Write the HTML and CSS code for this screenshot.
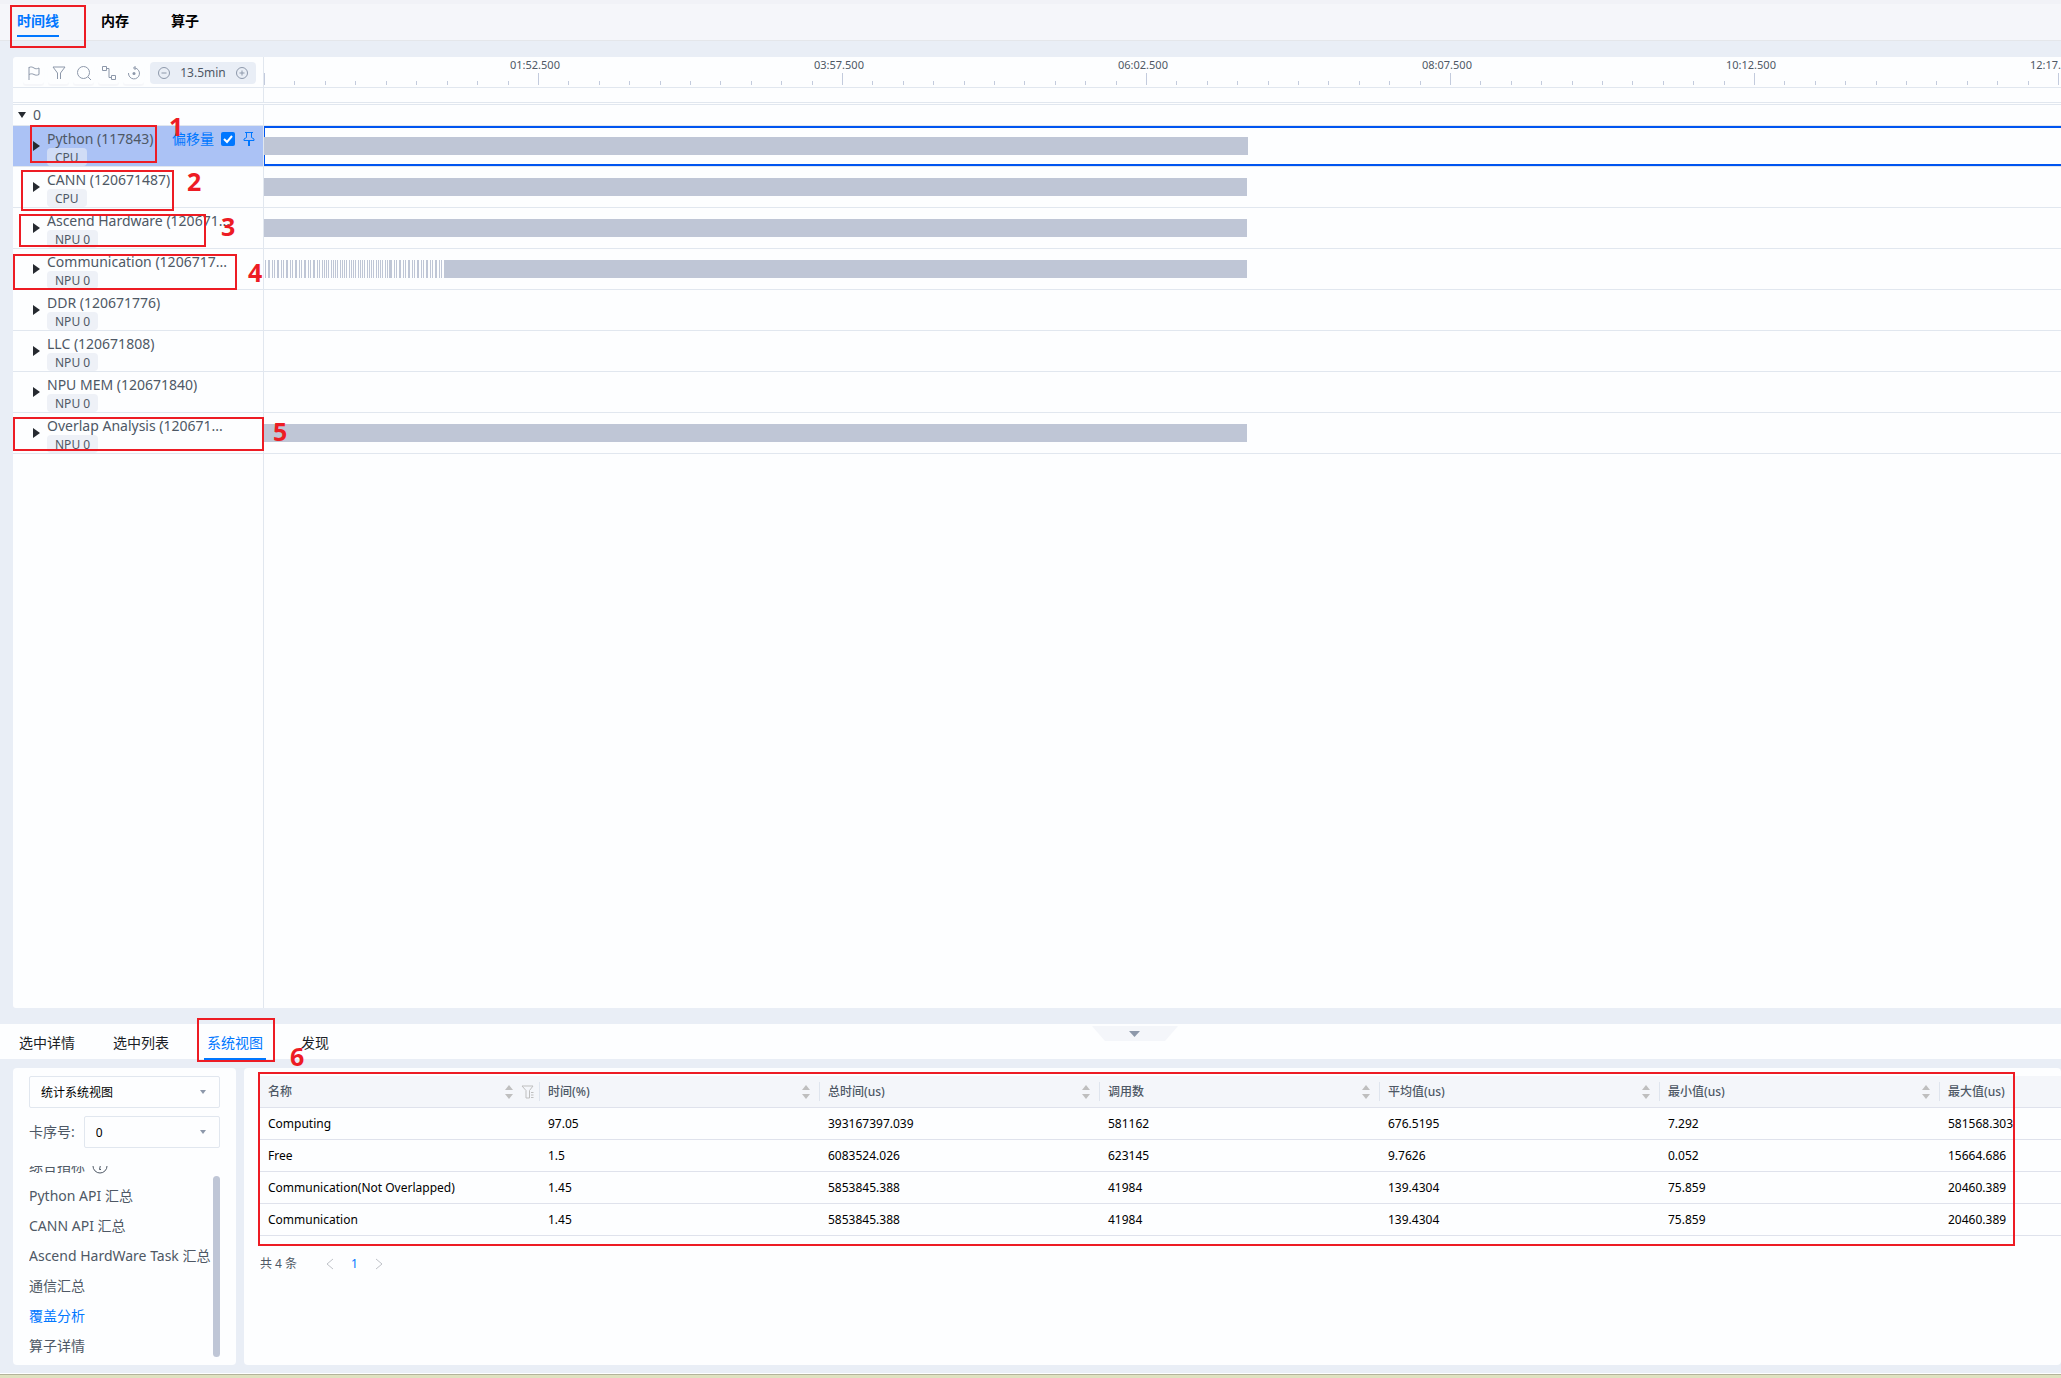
FILE: index.html
```
<!DOCTYPE html>
<html lang="zh-CN">
<head>
  <meta charset="UTF-8">
  <meta name="viewport" content="width=device-width, initial-scale=1.0">
  <title>时间线</title>
  <link rel="stylesheet" href="styles.css">
</head>
<body>
  <nav class="top-tabs">
    <button class="top-tab active">时间线</button>
    <button class="top-tab">内存</button>
    <button class="top-tab">算子</button>
  </nav>

  <main class="timeline">
    <div class="timeline-head">
      <div class="toolbar">
        <button class="tool" aria-label="标记">
          <svg width="16" height="16" viewBox="0 0 16 16"><path d="M3 15V2M3 2.500c2-1 3.500-.500 5 .500s3 1 5 0v6.500c-2 1-3.500.800-5 0s-3-1-5 0"/></svg>
        </button>
        <button class="tool" aria-label="过滤">
          <svg width="16" height="16" viewBox="0 0 16 16"><path d="M2 2h12L9.500 8v6M2 2l4.500 6v6"/></svg>
        </button>
        <button class="tool" aria-label="搜索">
          <svg width="16" height="16" viewBox="0 0 16 16"><circle cx="7.500" cy="7.500" r="6"/><path d="M12 12l3 3"/></svg>
        </button>
        <button class="tool" aria-label="连线">
          <svg width="16" height="16" viewBox="0 0 16 16"><path d="M1.500 1.500h4v4h-4zM10.500 10.500h4v4h-4zM5.500 3.500H8v9h2.500"/></svg>
        </button>
        <button class="tool" aria-label="重置">
          <svg width="16" height="16" viewBox="0 0 16 16"><path d="M9 3a5.500 5.500 0 1 1-6.500 5M9 3a5 5 0 0 0-2 0M9 1v4"/><circle class="dot" cx="8" cy="8.500" r="1.500"/></svg>
        </button>
        <div class="zoom-box">
          <button class="zoom-btn" aria-label="缩小">
            <svg width="14" height="14" viewBox="0 0 14 14"><circle cx="7" cy="7" r="5.500"/><path d="M4.500 7h5"/></svg>
          </button>
          <span>13.5min</span>
          <button class="zoom-btn" aria-label="放大">
            <svg width="14" height="14" viewBox="0 0 14 14"><circle cx="7" cy="7" r="5.500"/><path d="M4.500 7h5M7 4.500v5"/></svg>
          </button>
        </div>
      </div>
      <div class="ruler" id="ruler"></div>
    </div>

    <div class="row band"><div class="side"></div><div class="track"></div></div>
    <div class="row group">
      <div class="side"><span class="caret-down"></span>0</div>
      <div class="track"></div>
    </div>

    <div class="row unit selected">
      <div class="side">
        <span class="caret"></span>
        <div class="unit-info"><span class="name">Python (117843)</span><span class="tag">CPU</span></div>
        <div class="unit-actions">
          <label for="offset">偏移量</label>
          <input type="checkbox" id="offset" checked>
          <button class="pin" aria-label="置顶">
            <svg width="14" height="16" viewBox="0 0 14 16"><path d="M3 1.500h8M4.500 1.500v5L2 8v1.500h10V8L9.500 6.500v-5"/><path class="needle" d="M7 9.500V15"/></svg>
          </button>
        </div>
      </div>
      <div class="track"><div class="bar" style="width: 54.8%"></div></div>
    </div>
    <div class="row unit">
      <div class="side">
        <span class="caret"></span>
        <div class="unit-info"><span class="name">CANN (120671487)</span><span class="tag">CPU</span></div>
      </div>
      <div class="track"><div class="bar" style="width: 54.7%"></div></div>
    </div>
    <div class="row unit">
      <div class="side">
        <span class="caret"></span>
        <div class="unit-info"><span class="name">Ascend Hardware (120671...</span><span class="tag">NPU 0</span></div>
      </div>
      <div class="track"><div class="bar" style="width: 54.7%"></div></div>
    </div>
    <div class="row unit">
      <div class="side">
        <span class="caret"></span>
        <div class="unit-info"><span class="name">Communication (1206717...</span><span class="tag">NPU 0</span></div>
      </div>
      <div class="track">
        <div class="bar striped" style="width: 54.7%">
          <span class="lead"></span><span class="sparse"></span><span class="dense"></span><span class="sparse"></span><span class="solid"></span>
        </div>
      </div>
    </div>
    <div class="row unit">
      <div class="side">
        <span class="caret"></span>
        <div class="unit-info"><span class="name">DDR (120671776)</span><span class="tag">NPU 0</span></div>
      </div>
      <div class="track"></div>
    </div>
    <div class="row unit">
      <div class="side">
        <span class="caret"></span>
        <div class="unit-info"><span class="name">LLC (120671808)</span><span class="tag">NPU 0</span></div>
      </div>
      <div class="track"></div>
    </div>
    <div class="row unit">
      <div class="side">
        <span class="caret"></span>
        <div class="unit-info"><span class="name">NPU MEM (120671840)</span><span class="tag">NPU 0</span></div>
      </div>
      <div class="track"></div>
    </div>
    <div class="row unit">
      <div class="side">
        <span class="caret"></span>
        <div class="unit-info"><span class="name">Overlap Analysis (120671...</span><span class="tag">NPU 0</span></div>
      </div>
      <div class="track"><div class="bar" style="width: 54.7%"></div></div>
    </div>
    <div class="row rest"><div class="side"></div><div class="track"></div></div>
  </main>

  <nav class="bottom-tabs">
    <button class="bottom-tab">选中详情</button>
    <button class="bottom-tab">选中列表</button>
    <button class="bottom-tab active">系统视图</button>
    <button class="bottom-tab">发现</button>
    <button class="handle" aria-label="收起">
      <svg width="86" height="15" viewBox="0 0 86 15"><path fill="#f4f6fa" d="M0 0h86L73 15H13z"/><path fill="#8d98aa" d="M37 5h11l-5.500 6z"/></svg>
    </button>
  </nav>

  <section class="details">
    <aside class="panel views">
      <div class="select-box">
        <select aria-label="视图"><option>统计系统视图</option></select>
      </div>
      <div class="field">
        <label for="card">卡序号:</label>
        <div class="select-box"><select id="card"><option>0</option></select></div>
      </div>
      <div class="view-scroll">
        <ul class="view-list">
          <li><a href="#">综合指标</a>
            <svg width="16" height="16" viewBox="0 0 16 16"><circle cx="8" cy="8" r="7"/><path d="M8 4v1M7 7h1.500L7.500 11.500H9"/></svg>
          </li>
          <li><a href="#">Python API 汇总</a></li>
          <li><a href="#">CANN API 汇总</a></li>
          <li><a href="#">Ascend HardWare Task 汇总</a></li>
          <li><a href="#">通信汇总</a></li>
          <li><a href="#" class="active">覆盖分析</a></li>
          <li><a href="#">算子详情</a></li>
        </ul>
        <div class="scroll-thumb"></div>
      </div>
    </aside>

    <div class="panel result">
      <table>
        <thead>
          <tr id="head"></tr>
        </thead>
        <tbody>
          <tr><td>Computing</td><td>97.05</td><td>393167397.039</td><td>581162</td><td>676.5195</td><td>7.292</td><td>581568.303</td></tr>
          <tr><td>Free</td><td>1.5</td><td>6083524.026</td><td>623145</td><td>9.7626</td><td>0.052</td><td>15664.686</td></tr>
          <tr><td>Communication(Not Overlapped)</td><td>1.45</td><td>5853845.388</td><td>41984</td><td>139.4304</td><td>75.859</td><td>20460.389</td></tr>
          <tr><td>Communication</td><td>1.45</td><td>5853845.388</td><td>41984</td><td>139.4304</td><td>75.859</td><td>20460.389</td></tr>
        </tbody>
      </table>
      <div class="pager">
        <span>共 4 条</span>
        <button aria-label="上一页"><svg width="8" height="12" viewBox="0 0 8 12"><path d="M7 1L1 6l6 5"/></svg></button>
        <button class="current">1</button>
        <button aria-label="下一页"><svg width="8" height="12" viewBox="0 0 8 12"><path d="M1 1l6 5-6 5"/></svg></button>
      </div>
    </div>
  </section>
  <div class="edge"></div>

  <!-- Marcas rojas numeradas -->
  <div class="mark mark-tab"></div>
  <div class="mark mark-1"></div><span class="num num-1">1</span>
  <div class="mark mark-2"></div><span class="num num-2">2</span>
  <div class="mark mark-3"></div><span class="num num-3">3</span>
  <div class="mark mark-4"></div><span class="num num-4">4</span>
  <div class="mark mark-5"></div><span class="num num-5">5</span>
  <div class="mark mark-view"></div><span class="num num-6">6</span>
  <div class="mark mark-table"></div>

  <script>
    // Regla de tiempo: un tramo por etiqueta, diez marcas por tramo
    const times = ['', '01:52.500', '03:57.500', '06:02.500', '08:07.500', '10:12.500', '12:17.500'];
    document.getElementById('ruler').innerHTML = times.map(time =>
      `<div class="segment"><span class="time">${time}</span>${'<i></i>'.repeat(time ? 10 : 9)}</div>`
    ).join('');

    // Cabecera de la tabla con los iconos de ordenar
    const columns = ['名称', '时间(%)', '总时间(us)', '调用数', '平均值(us)', '最小值(us)', '最大值(us)'];
    const sortIcon = '<button class="sort" aria-label="排序"><svg width="8" height="14" viewBox="0 0 8 14"><path d="M4 0l4 5H0zM4 14l4-5H0z"/></svg></button>';
    const filterIcon = '<button class="filter" aria-label="筛选"><svg width="13" height="14" viewBox="0 0 13 14"><path d="M1 1h11L8.500 5.500V13H5V5.500z"/><path d="M10 7.500h2.500M10 10h2.500M10 12.500h2.500"/></svg></button>';
    document.getElementById('head').innerHTML = columns.map((name, i) =>
      `<th scope="col"><div class="th">${name}${i < 6 ? sortIcon : ''}${i === 0 ? filterIcon : ''}</div></th>`
    ).join('');
  </script>
</body>
</html>
```
FILE: styles.css
```
* {
  box-sizing: border-box;
}

body {
  margin: 0;
  height: 100vh;
  display: flex;
  flex-direction: column;
  position: relative;
  overflow: hidden;
  background-color: #e9eef6;
  color: #4e5865;
  font-family: "Noto Sans", "Noto Sans CJK SC", sans-serif;
  font-size: 14px;
  line-height: 20px;
}

button {
  border: 0;
  padding: 0;
  background: none;
  color: inherit;
  font: inherit;
  cursor: pointer;
}

svg {
  display: block;
  fill: none;
}

a {
  color: inherit;
  text-decoration: none;
}

/* Pestañas superiores */
.top-tabs {
  display: flex;
  gap: 42px;
  height: 41px;
  flex: none;
  padding: 0 17px;
  background-color: #f5f6fa;
  border-top: 4px solid #f1f2f7;
  border-bottom: 1px solid #e4e6ea;
}

.top-tab {
  height: 33px;
  color: #000;
  font-weight: bold;
}

.top-tab.active {
  color: #0077ff;
  border-bottom: 2px solid #0077ff;
  padding-top: 2px;
}

/* Línea de tiempo */
.timeline {
  flex: 1;
  min-height: 0;
  display: flex;
  flex-direction: column;
  margin: 16px 0 16px 13px;
  background-color: #fdfeff;
  border-radius: 3px 0 0 3px;
  overflow: hidden;
}

.timeline-head {
  display: flex;
  flex: none;
  height: 31px;
  border-bottom: 1px solid #e1e7ef;
}

.toolbar,
.side {
  width: 251px;
  flex: none;
  border-right: 1px solid #e1e7ef;
}

.toolbar {
  display: flex;
  align-items: center;
  gap: 4px;
  padding: 2px 7px 0 10px;
}

.tool {
  display: flex;
  justify-content: center;
  align-items: center;
  width: 21px;
  height: 22px;
  border-radius: 3px;
  box-shadow: 0 2px 1px #f6f7fa;
}

.tool svg,
.zoom-btn svg {
  stroke: #8d98aa;
}

.tool .dot {
  fill: #8d98aa;
  stroke: none;
}

.zoom-box {
  flex: 1;
  display: flex;
  align-items: center;
  justify-content: space-between;
  height: 22px;
  margin-left: 2px;
  padding: 0 7px;
  border-radius: 4px;
  background-color: #e9eef6;
  font-size: 12px;
}

.ruler {
  flex: 1;
  display: flex;
  overflow: hidden;
}

.segment {
  flex: none;
  width: 304px;
  display: grid;
  grid-template-columns: repeat(10, 1fr);
  grid-template-rows: 16px 12px;
  align-items: end;
}

.segment:first-child {
  width: 274px;
  grid-template-columns: repeat(9, 1fr);
}

.time {
  grid-column: 1 / -1;
  height: 16px;
  margin-left: -28px;
  font-size: 11px;
  line-height: 16px;
}

.segment i {
  width: 1px;
  height: 4px;
  background-color: #c3cbdd;
}

.segment i:nth-of-type(1) {
  height: 12px;
}

.row {
  display: flex;
  flex: none;
}

.band {
  height: 15px;
  border-bottom: 1px solid #e1e7ef;
}

.group {
  height: 22px;
  margin-top: 1px;
  border-top: 1px solid #e1e7ef;
  border-bottom: 1px solid #e1e7ef;
}

.group .side {
  display: flex;
  align-items: center;
  gap: 7px;
  padding-left: 5px;
}

.caret-down {
  border: 4px solid transparent;
  border-top: 6px solid #262a30;
  border-bottom: 0;
}

.unit {
  height: 41px;
  border-bottom: 1px solid #e1e7ef;
}

.unit .side {
  display: flex;
  padding-left: 20px;
}

.caret {
  align-self: center;
  border: 5px solid transparent;
  border-left: 7px solid #262a30;
  border-right: 0;
}

.unit-info {
  display: flex;
  flex-direction: column;
  align-items: flex-start;
  margin-left: 7px;
  white-space: nowrap;
}

.name {
  height: 22px;
  line-height: 26px;
}

.tag {
  height: 18px;
  padding: 0 8px;
  border-radius: 4px;
  background-color: #eef1f7;
  font-size: 12px;
  line-height: 19px;
}

.selected .side {
  background-color: #abc2f5;
}

.selected .tag {
  background-color: #d0dcf6;
}

.unit-actions {
  display: flex;
  align-items: center;
  gap: 7px;
  height: 26px;
  margin-left: auto;
  padding-right: 7px;
  color: #0077ff;
}

.unit-actions input {
  appearance: none;
  width: 14px;
  height: 14px;
  margin: 0;
  border-radius: 2px;
  background: #0077ff url("data:image/svg+xml,%3Csvg xmlns='http://www.w3.org/2000/svg' viewBox='0 0 14 14'%3E%3Cpath d='M3 7l3 3 5-6' fill='none' stroke='white' stroke-width='2'/%3E%3C/svg%3E");
}

.pin svg {
  stroke: #0077ff;
}

.pin .needle {
  stroke-width: 2;
}

.track {
  flex: 1;
  min-width: 0;
  display: flex;
  align-items: center;
}

.selected .track {
  border: 2px solid #0055f0;
  border-left-width: 1px;
  border-right: 0;
}

.bar {
  height: 18px;
  background-color: #bfc6d6;
}

.selected .bar {
  margin-left: -1px;
}

.striped {
  display: flex;
  background: none;
}

.lead {
  width: 1px;
  margin: 0 2px 0 1px;
  background-color: #bfc6d6;
}

.sparse {
  width: 54px;
  background: repeating-linear-gradient(90deg, #bfc6d6 0 2px, transparent 2px 4px, #bfc6d6 4px 5px, transparent 5px 6px, #bfc6d6 6px 7px, transparent 7px 9px);
}

.dense {
  width: 68px;
  background: repeating-linear-gradient(90deg, #bfc6d6 0 1px, transparent 1px 2px, #bfc6d6 2px 3px, transparent 3px 4px, #bfc6d6 4px 5px, transparent 5px 6px, #bfc6d6 6px 7px, transparent 7px 9px);
}

.solid {
  flex: 1;
  background-color: #bfc6d6;
}

.rest {
  flex: 1;
}

/* Pestañas inferiores */
.bottom-tabs {
  position: relative;
  flex: none;
  display: flex;
  gap: 32px;
  height: 35px;
  padding-left: 16px;
  background-color: #fdfeff;
}

.bottom-tab {
  height: 36px;
  padding: 2px 3px 0;
  color: #1b1f26;
}

.bottom-tab.active {
  color: #0077ff;
  border-bottom: 2px solid #0077ff;
  padding-top: 4px;
}

.handle {
  position: absolute;
  top: 2px;
  left: 53%;
}

/* Panel de detalles */
.details {
  flex: none;
  display: flex;
  gap: 8px;
  height: 297px;
  margin: 9px 0 8px 13px;
}

.panel {
  background-color: #fdfeff;
  border-radius: 4px;
}

.views {
  width: 223px;
  flex: none;
  display: flex;
  flex-direction: column;
  gap: 8px;
  padding: 8px 16px;
}

.select-box {
  flex: none;
  position: relative;
}

.select-box::after {
  content: "";
  position: absolute;
  top: 14px;
  right: 14px;
  border: 3px solid transparent;
  border-top: 4px solid #8d98aa;
  border-bottom: 0;
}

select {
  display: block;
  appearance: none;
  width: 100%;
  height: 32px;
  padding: 0 11px;
  border: 1px solid #e1e7ef;
  border-radius: 2px;
  background-color: #fdfeff;
  color: #000;
  font-family: inherit;
  font-size: 12px;
}

.field {
  display: flex;
  align-items: center;
  gap: 9px;
}

.field .select-box {
  flex: 1;
}

.view-scroll {
  flex: 1;
  min-height: 0;
  display: flex;
  justify-content: space-between;
  overflow: hidden;
  margin-top: 10px;
}

.view-list {
  width: 184px;
  margin: -15px 0 0;
  padding: 0;
  list-style: none;
  white-space: nowrap;
}

.view-list li {
  display: flex;
  align-items: center;
  gap: 7px;
  height: 30px;
}

.view-list svg {
  stroke: #4e5865;
}

.view-list .active {
  color: #0077ff;
}

.scroll-thumb {
  flex: none;
  width: 7px;
  margin-top: 10px;
  border-radius: 4px;
  background-color: #bfc6d6;
}

.result {
  flex: 1;
  min-width: 0;
  padding: 8px 0 0 16px;
  font-size: 12px;
}

table {
  width: 100%;
  table-layout: fixed;
  border-collapse: separate;
  border-spacing: 0;
}

th,
td {
  height: 32px;
  padding: 0 8px;
  border-bottom: 1px solid #dfe2ec;
  text-align: left;
  white-space: nowrap;
}

th {
  width: 280px;
  padding-right: 0;
  background-color: #f4f6fa;
  font-weight: 500;
}

th:last-child {
  width: auto;
}

td {
  color: #000;
}

.th {
  display: flex;
  align-items: center;
  height: 19px;
  padding-right: 9px;
  border-right: 1px solid #dfe5ee;
}

th:last-child .th {
  border-right: 0;
}

.sort {
  margin-left: auto;
}

.sort svg {
  fill: #bfbfbf;
}

.filter {
  margin-left: 8px;
}

th:first-child .th {
  padding-right: 5px;
}

.filter svg {
  stroke: #bfbfbf;
}

.pager {
  display: flex;
  align-items: center;
  gap: 17px;
  margin-top: 18px;
}

.pager span {
  margin-right: 12px;
}

.pager svg {
  stroke: #bfc2c8;
}

.pager .current {
  color: #0077ff;
}

.edge {
  flex: none;
  height: 5px;
  border-top: 1px solid #fff;
  background-color: #dfe2c0;
  box-shadow: inset 0 1px #b3b39b;
}

/* Marcas rojas */
.mark {
  position: absolute;
  border: 2px solid #ed1c24;
  pointer-events: none;
}

.num {
  position: absolute;
  color: #ed1c24;
  font-size: 25px;
  font-weight: bold;
  line-height: 26px;
}

.mark-tab { top: 5px; left: 10px; width: 76px; height: 43px; }
.mark-1 { top: 125px; left: 30px; width: 127px; height: 38px; }
.mark-2 { top: 170px; left: 21px; width: 153px; height: 41px; }
.mark-3 { top: 214px; left: 19px; width: 187px; height: 33px; }
.mark-4 { top: 254px; left: 13px; width: 224px; height: 36px; }
.mark-5 { top: 417px; left: 13px; width: 251px; height: 34px; }
.mark-view { bottom: 316px; left: 197px; width: 78px; height: 44px; }
.mark-table { bottom: 132px; left: 258px; right: 46px; height: 174px; }

.num-1 { top: 113px; left: 169px; }
.num-2 { top: 168px; left: 187px; }
.num-3 { top: 213px; left: 221px; }
.num-4 { top: 259px; left: 248px; }
.num-5 { top: 418px; left: 273px; }
.num-6 { bottom: 309px; left: 290px; }
```
